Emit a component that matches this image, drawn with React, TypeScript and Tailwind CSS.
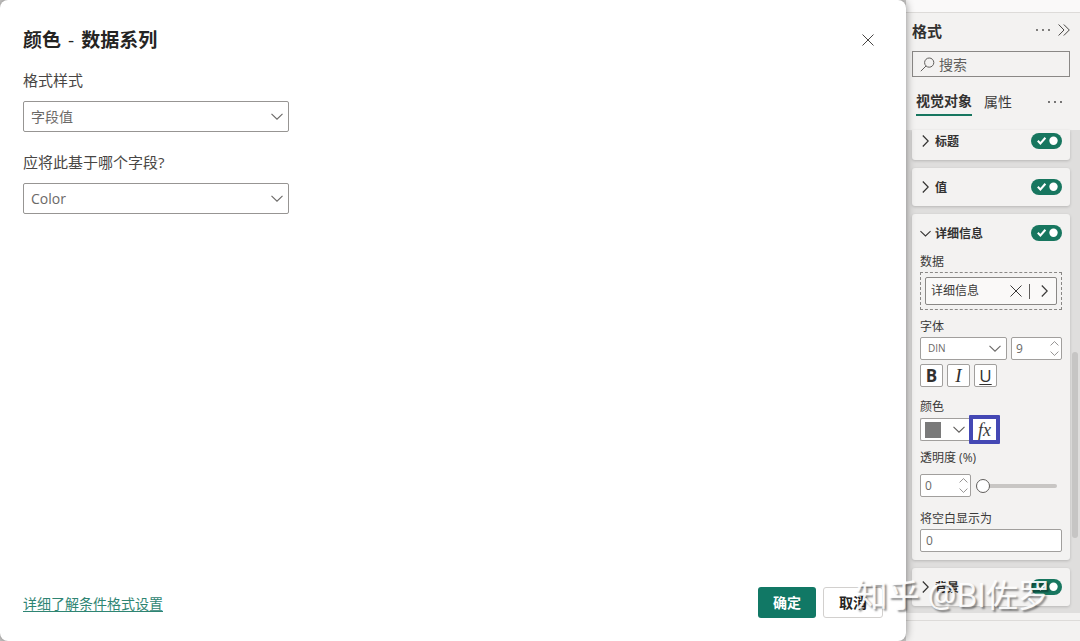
import React, { useId, useState } from 'react';

type IconProps = { className?: string };

const ChevronDown = ({ className = 'h-[7px] w-[12px]' }: IconProps) => (
  <svg viewBox="0 0 12 7" className={className} fill="none" stroke="currentColor" strokeWidth="1.1">
    <path d="M0.5 0.8 6 6.2 11.5 0.8" />
  </svg>
);

const ChevronRight = ({ className = 'h-[12px] w-[7px]' }: IconProps) => (
  <svg viewBox="0 0 7 12" className={className} fill="none" stroke="currentColor" strokeWidth="1.2">
    <path d="M0.8 0.5 6.2 6 0.8 11.5" />
  </svg>
);

const Cross = ({ className = 'h-[12px] w-[12px]' }: IconProps) => (
  <svg viewBox="0 0 12 12" className={className} fill="none" stroke="currentColor" strokeWidth="1">
    <path d="M0.5 0.5 11.5 11.5M11.5 0.5 0.5 11.5" />
  </svg>
);

const Dots = () => (
  <svg viewBox="0 0 16 4" className="h-[4px] w-[16px]" fill="currentColor">
    <circle cx="2" cy="2" r="0.9" />
    <circle cx="8" cy="2" r="0.9" />
    <circle cx="14" cy="2" r="0.9" />
  </svg>
);

function DialogSelect({ label, value }: { label: string; value: string }) {
  const id = useId();
  return (
    <div className="flex flex-col gap-[10px]">
      <label htmlFor={id} className="text-[15px] leading-[22px] text-[#484644]">
        {label}
      </label>
      <div className="relative w-[266px] text-[#6b6967]">
        <select
          id={id}
          className="block h-[31px] w-full appearance-none rounded-[2px] border border-[#979593] bg-white pl-[7px] pr-8 text-[14px]"
        >
          <option>{value}</option>
        </select>
        <ChevronDown className="pointer-events-none absolute right-[6px] top-3 h-[7px] w-[12px]" />
      </div>
    </div>
  );
}

function Toggle({ label }: { label: string }) {
  const [on, setOn] = useState(true);
  return (
    <label className="relative block h-4 w-[31px] cursor-pointer">
      <input
        type="checkbox"
        aria-label={label}
        checked={on}
        onChange={() => setOn(!on)}
        className="absolute inset-0 h-full w-full cursor-pointer appearance-none rounded-full bg-[#8a8886] checked:bg-[#17765f]"
      />
      <svg viewBox="0 0 31 16" className={`pointer-events-none relative h-4 w-[31px] ${on ? '' : '-scale-x-100'}`}>
        {on && <path d="M6.8 7.8 9.4 10.4 14.4 4.8" fill="none" stroke="#fff" strokeWidth="2.1" />}
        <circle cx="22.5" cy="7.8" r="4.2" fill="#fff" />
      </svg>
    </label>
  );
}

function SectionHeader({ title, open = false }: { title: string; open?: boolean }) {
  return (
    <div className="flex items-center justify-between">
      <button className="flex items-center gap-[4px] text-[12px] font-bold leading-[18px] text-[#323130]">
        <span className="flex w-[11px] justify-center">{open ? <ChevronDown /> : <ChevronRight />}</span>
        <span className="pt-[2px]">{title}</span>
      </button>
      <Toggle label={title} />
    </div>
  );
}

function Spinner({ label, id, initial }: { label: string; id?: string; initial: number }) {
  const [value, setValue] = useState(initial);
  return (
    <div className="flex h-[23px] w-[51px] shrink-0 items-center rounded-[2px] border border-[#a19f9d] bg-white pl-1 pr-[2px] text-[#6b6967]">
      <input
        id={id}
        aria-label={label}
        inputMode="numeric"
        value={value}
        onChange={(e) => setValue(Number(e.target.value) || 0)}
        className="w-full min-w-0 bg-transparent text-[12px] outline-none"
      />
      <div className="flex shrink-0 flex-col gap-[5px] text-[#797775]">
        <button aria-label="+" onClick={() => setValue(value + 1)}>
          <ChevronDown className="h-[5px] w-[9px] rotate-180" />
        </button>
        <button aria-label="-" onClick={() => setValue(Math.max(0, value - 1))}>
          <ChevronDown className="h-[5px] w-[9px]" />
        </button>
      </div>
    </div>
  );
}

const card = 'rounded-[3px] bg-[#f3f2f1] px-2 shadow-[0_1px_3px_rgba(0,0,0,0.18)]';
const fieldLabel = 'block pt-px text-[12px] leading-[17px] text-[#3b3a39]';
const styleButton =
  'flex h-[23px] w-[23px] items-center justify-center rounded-[2px] border border-[#a19f9d] bg-white leading-[20px] text-[#323130]';

function DetailCard() {
  return (
    <section className={`${card} pb-2`}>
      <div className="flex h-[38px] flex-col justify-center">
        <SectionHeader title="详细信息" open />
      </div>

      <span className={fieldLabel}>数据</span>
      <div className="mt-[2px] border border-dashed border-[#8a8886] p-1">
        <div className="flex h-[28px] items-center rounded-[2px] border border-[#8a8886] bg-[#faf9f8] pl-[5px] pr-2 text-[#3b3a39]">
          <span className="flex-1 text-[12px] leading-[18px]">详细信息</span>
          <button aria-label="移除">
            <Cross />
          </button>
          <span className="ml-[7px] mr-[11px] h-[15px] w-px bg-[#605e5c]" />
          <button aria-label="更多">
            <ChevronRight />
          </button>
        </div>
      </div>

      <label htmlFor="font" className={`${fieldLabel} mt-[7px]`}>
        字体
      </label>
      <div className="mt-[2px] flex gap-1">
        <div className="relative flex-1 text-[#6b6967]">
          <select
            id="font"
            className="block h-[23px] w-full appearance-none rounded-[2px] border border-[#a19f9d] bg-white pl-[7px] text-[10px]"
          >
            <option>DIN</option>
          </select>
          <ChevronDown className="pointer-events-none absolute right-[6px] top-2 h-[7px] w-[12px]" />
        </div>
        <Spinner label="字号" initial={9} />
      </div>
      <div className="mt-1 flex gap-1">
        <button className={`${styleButton} text-[17px] font-bold`}>B</button>
        <button className={`${styleButton} font-[Liberation_Serif] text-[19px] italic`}>I</button>
        <button className={`${styleButton} text-[17px] underline underline-offset-2`}>U</button>
      </div>

      <span className={`${fieldLabel} mt-[10px]`}>颜色</span>
      <div className="flex h-[29px] items-center">
        <button
          aria-label="颜色"
          className="flex h-[23px] w-[49px] items-center justify-between rounded-l-[2px] border border-r-0 border-[#a19f9d] bg-white pl-1 pr-1 text-[#605e5c]"
        >
          <span className="h-4 w-4 bg-[#7a7a7a]" />
          <ChevronDown />
        </button>
        <button className="flex h-[29px] w-[31px] items-center justify-center rounded-[1px] border-[4px] border-[#4448b4] bg-white font-[Liberation_Serif] text-[18px] italic leading-[20px] text-[#3b3a39]">
          fx
        </button>
      </div>

      <label htmlFor="opacity" className={`${fieldLabel} mt-1`}>
        透明度 (%)
      </label>
      <div className="mt-2 flex items-center gap-[5px]">
        <Spinner id="opacity" label="透明度 (%)" initial={0} />
        <input
          type="range"
          aria-label="透明度 (%)"
          defaultValue={0}
          className="mr-[5px] h-[14px] min-w-0 flex-1 appearance-none bg-transparent [&::-webkit-slider-runnable-track]:h-[4px] [&::-webkit-slider-runnable-track]:rounded-full [&::-webkit-slider-runnable-track]:bg-[#c8c6c4] [&::-webkit-slider-thumb]:-mt-[5px] [&::-webkit-slider-thumb]:h-[14px] [&::-webkit-slider-thumb]:w-[14px] [&::-webkit-slider-thumb]:appearance-none [&::-webkit-slider-thumb]:rounded-full [&::-webkit-slider-thumb]:border [&::-webkit-slider-thumb]:border-[#605e5c] [&::-webkit-slider-thumb]:bg-white"
        />
      </div>

      <label htmlFor="blank" className={`${fieldLabel} mt-3`}>
        将空白显示为
      </label>
      <input
        id="blank"
        defaultValue="0"
        className="mt-[2px] block h-[23px] w-full rounded-[2px] border border-[#a19f9d] bg-white px-[5px] text-[12px] text-[#6b6967]"
      />
    </section>
  );
}

function FormatPane() {
  return (
    <aside className="flex w-[174px] shrink-0 flex-col bg-[#f3f2f1]">
      <div className="h-[13px] border-b border-[#dddbd9] bg-[#faf9f9]" />
      <div className="flex h-[38px] items-center pl-[6px] pr-[10px] text-[#484644]">
        <h2 className="flex-1 pb-[3px] text-[15px] font-bold leading-[22px] text-[#323130]">格式</h2>
        <div className="flex items-center gap-[7px] pb-1">
          <button aria-label="更多选项">
            <Dots />
          </button>
          <button aria-label="折叠">
            <svg viewBox="0 0 12 12" className="h-[12px] w-[12px]" fill="none" stroke="currentColor" strokeWidth="1">
              <path d="M0.6 0.5 6 6 0.6 11.5M5.8 0.5 11.3 6 5.8 11.5" />
            </svg>
          </button>
        </div>
      </div>
      <label className="ml-[6px] mr-[10px] flex h-[26px] items-center gap-1 border border-[#8a8886] pl-[7px]">
        <svg viewBox="0 0 15 15" className="h-[15px] w-[15px] shrink-0 text-[#605e5c]" fill="none" stroke="currentColor" strokeWidth="1">
          <circle cx="9.2" cy="5.6" r="4.6" />
          <path d="M6 9 0.8 14.2" />
        </svg>
        <input
          aria-label="搜索"
          placeholder="搜索"
          className="w-full min-w-0 bg-transparent text-[14px] outline-none placeholder:text-[#605e5c]"
        />
      </label>
      <div className="flex h-[53px] items-center pb-1 pl-[10px] pr-[17px] text-[14px] leading-[20px] text-[#3b3a39]">
        <button className="mt-1 border-b-2 border-[#17765f] pb-[3px] font-bold text-[#323130]">视觉对象</button>
        <button className="ml-3">属性</button>
        <button aria-label="更多" className="ml-auto">
          <Dots />
        </button>
      </div>

      <div className="flex bg-[#dfdedd]">
        <div className="flex min-w-0 flex-1 flex-col gap-2 pb-[7px] pl-[6px]">
          <section className={`${card} flex h-[30px] flex-col justify-center rounded-t-none pb-2`}>
            <SectionHeader title="标题" />
          </section>
          <section className={`${card} flex h-[38px] flex-col justify-center`}>
            <SectionHeader title="值" />
          </section>
          <DetailCard />
          <section className={`${card} flex h-[38px] flex-col justify-center`}>
            <SectionHeader title="背景" />
          </section>
        </div>
        <div className="ml-[2px] mr-[2px] w-[6px] pt-[222px]">
          <div className="h-[186px] rounded-full bg-[#c6c5c4]" />
        </div>
      </div>
      <div className="h-[8px] border-b border-[#dddbd9]" />
    </aside>
  );
}

export default function App() {
  return (
    <div className="relative flex min-h-screen bg-[#cfcecd] font-['Open_Sans','Noto_Sans_CJK_SC',sans-serif]">
      <main
        role="dialog"
        aria-labelledby="dialog-title"
        className="relative z-10 flex min-w-0 flex-1 flex-col rounded-[8px] bg-white p-[23px] shadow-[0_0_8px_rgba(0,0,0,0.45)]"
      >
        <header className="flex items-center justify-between pr-[9px] pt-[3px]">
          <h1 id="dialog-title" className="flex gap-[7px] text-[19px] font-bold leading-[28px] text-[#252423]">
            <span>颜色</span>
            <span className="font-normal">-</span>
            <span>数据系列</span>
          </h1>
          <button aria-label="关闭" className="text-[#484644]">
            <Cross />
          </button>
        </header>

        <div className="mt-[15px] flex flex-col gap-[19px]">
          <DialogSelect label="格式样式" value="字段值" />
          <DialogSelect label="应将此基于哪个字段?" value="Color" />
        </div>

        <footer className="mt-auto flex items-center justify-between">
          <a href="#" className="pt-[2px] text-[14px] leading-[20px] text-[#2f8573] underline underline-offset-2">
            详细了解条件格式设置
          </a>
          <div className="flex gap-[7px] text-[14px] font-bold leading-[20px]">
            <button className="h-[31px] w-[58px] rounded-[3px] bg-[#117865] text-white">确定</button>
            <button className="h-[31px] w-[60px] rounded-[3px] border border-[#d2d0ce] bg-white text-[#252423]">
              取消
            </button>
          </div>
        </footer>
      </main>

      <FormatPane />

      <div className="pointer-events-none absolute bottom-[26px] right-[30px] z-20 whitespace-nowrap text-[32px] leading-[40px] text-white/90 [text-shadow:2px_2px_2px_rgba(0,0,0,0.45)]">
        知乎 @BI佐罗
      </div>
    </div>
  );
}
